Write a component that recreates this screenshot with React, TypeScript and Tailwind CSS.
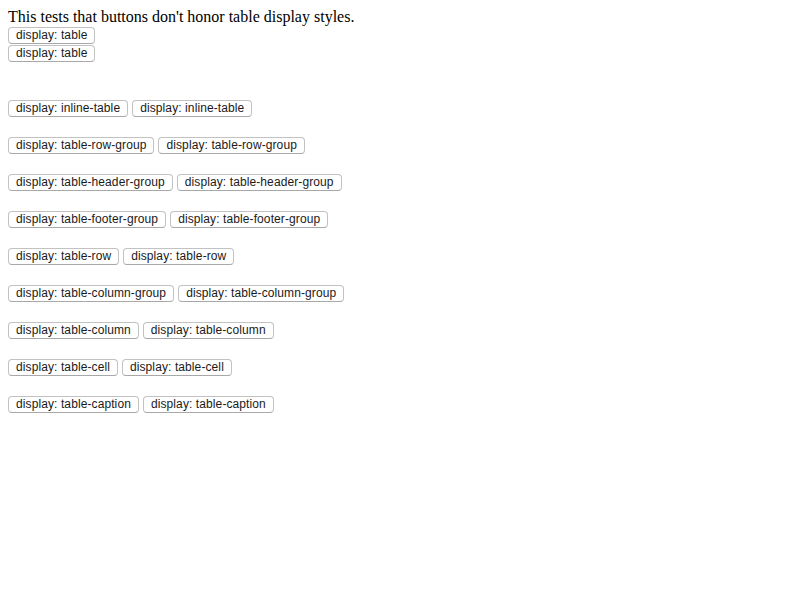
import React from 'react';

const rows = [
  'inline-table',
  'table-row-group',
  'table-header-group',
  'table-footer-group',
  'table-row',
  'table-column-group',
  'table-column',
  'table-cell',
  'table-caption',
];

const Btn: React.FC<{ label: string }> = ({ label }) => (
  <button className="h-[17px] px-[7px] rounded-[4px] border border-[#c2c2c2] border-b-[#a8a8a8] bg-white text-[12px] leading-[15px] tracking-[0.1px] text-[#1a1a1a] font-['Liberation_Sans',Arial,sans-serif] whitespace-nowrap">
    display: {label}
  </button>
);

export default function App() {
  return (
    <div className="w-[800px] h-[600px] bg-white p-2">
      <div className="font-['Liberation_Serif','Times_New_Roman',serif] text-[16px] leading-[18px] text-black">
        This tests that buttons don't honor table display styles.
      </div>

      {/* display: table buttons stack as blocks */}
      <div className="mt-[1px] flex flex-col items-start gap-[1px]">
        <Btn label="table" />
        <Btn label="table" />
      </div>

      <div className="mt-[38px] flex flex-col gap-[20px]">
        {rows.map((r) => (
          <div key={r} className="flex gap-[4px]">
            <Btn label={r} />
            <Btn label={r} />
          </div>
        ))}
      </div>
    </div>
  );
}
